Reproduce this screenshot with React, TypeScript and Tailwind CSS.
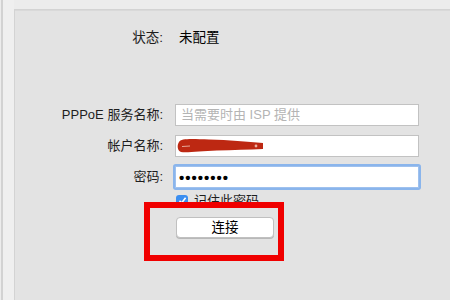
export default function App() {
  const font = { fontFamily: '"Liberation Sans", "Noto Sans CJK SC", sans-serif' };

  return (
    <div
      className="relative w-[450px] h-[300px] overflow-hidden bg-[#ececec] text-[13px] text-[#1e1e1e] flex"
      style={font}
    >
      {/* left sidebar edge */}
      <div className="w-[13px] h-full border-l-[2px] border-l-[#d2d2d2] ml-[1px] bg-[#efefef] shrink-0" />

      {/* settings panel */}
      <div className="flex-1 mt-[9px] border-t border-l border-[#d3d3d3] bg-[#e3e3e3] shadow-[inset_0_3px_0_-2px_#d9d9d9]">
        <div className="grid grid-cols-[148px_244px] gap-x-[12px] pt-[19px]">
          <div className="text-right leading-[18px] text-[13.5px]">状态:</div>
          <div className="pl-[4px] leading-[18px] text-[13.5px] text-black">未配置</div>
        </div>

        <div className="grid grid-cols-[148px_244px] gap-x-[12px] gap-y-[9px] mt-[57px] items-center">
          <div className="text-right leading-[22px]">PPPoE 服务名称:</div>
          <div className="h-[22px] bg-white border border-[#c2c2c2] px-[5px] leading-[20px] text-[#b4b4b4]">
            当需要时由 ISP 提供
          </div>

          <div className="text-right leading-[22px]">帐户名称:</div>
          <div className="h-[22px] bg-white border border-[#c2c2c2] flex items-center pl-[1px]">
            <svg width="88" height="18" viewBox="0 0 88 18">
              <path
                d="M2 5 C4 1, 16 2, 32 2.5 C52 3, 70 4.5, 86 6 L86 12 C72 12.5, 56 13, 40 13.5 C24 14, 10 16, 4 15 C0 13.5, 0 8, 2 5 Z"
                fill="#bd2812"
              />
              <path d="M5 9.5 L13 9" stroke="#e6a898" strokeWidth="1" />
              <circle cx="79" cy="9" r="1.4" fill="#eab0a0" />
            </svg>
          </div>

          <div className="text-right leading-[22px]">密码:</div>
          <div className="h-[22px] bg-white border border-[#9fc1ee] ring-[2px] ring-[#8ab5ec] rounded-[1px] px-[3px] flex items-center">
            <span className="text-[15px] font-bold tracking-[1px] text-black leading-none">••••••••</span>
          </div>
        </div>

        <div className="ml-[161px] mt-[6px] flex items-center gap-[6px] h-[13px]">
          <div className="w-[12px] h-[12px] rounded-[3px] bg-[#3b8ef0] flex items-center justify-center">
            <svg width="9" height="9" viewBox="0 0 9 9">
              <path d="M1.5 4.8 L3.6 7 L7.6 1.8" stroke="white" strokeWidth="1.6" fill="none" />
            </svg>
          </div>
          <span className="leading-[13px]">记住此密码</span>
        </div>

        <div className="ml-[161px] mt-[10px]">
          <button className="w-[98px] h-[21px] bg-white border border-[#c0c0c0] rounded-[4px] shadow-[0_1px_0_#b8b8b8] text-[13.5px] leading-[19px] text-black">
            连接
          </button>
        </div>
      </div>

      {/* red annotation box */}
      <div className="absolute left-[144px] top-[202px] w-[140px] h-[59px] border-[6px] border-[#f00000]" />
    </div>
  );
}
